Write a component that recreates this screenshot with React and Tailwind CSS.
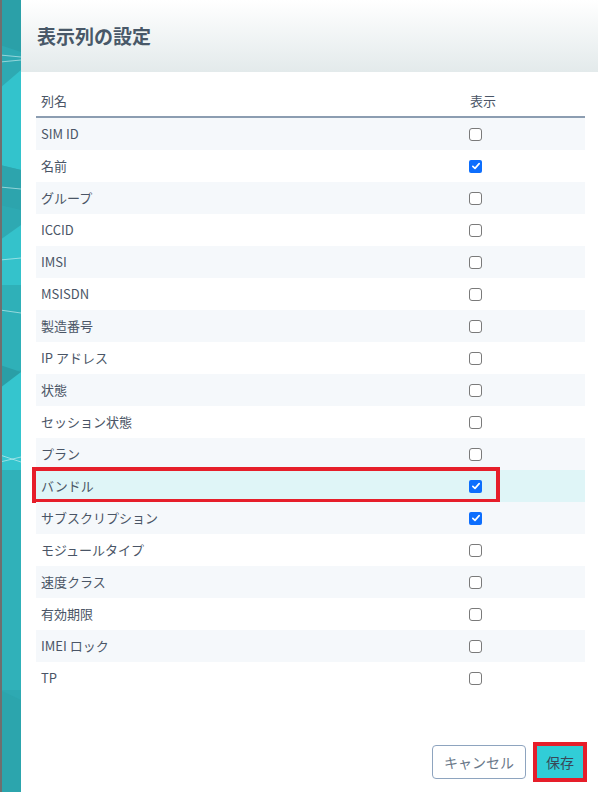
const rows = [
  { name: "SIM ID", on: false },
  { name: "名前", on: true },
  { name: "グループ", on: false },
  { name: "ICCID", on: false },
  { name: "IMSI", on: false },
  { name: "MSISDN", on: false },
  { name: "製造番号", on: false },
  { name: "IP アドレス", on: false },
  { name: "状態", on: false },
  { name: "セッション状態", on: false },
  { name: "プラン", on: false },
  { name: "バンドル", on: true, hl: true },
  { name: "サブスクリプション", on: true },
  { name: "モジュールタイプ", on: false },
  { name: "速度クラス", on: false },
  { name: "有効期限", on: false },
  { name: "IMEI ロック", on: false },
  { name: "TP", on: false },
];

function Check({ on }) {
  if (on) {
    return (
      <span className="grid h-[13px] w-[13px] place-items-center rounded-[2px] bg-[#0d6efd]">
        <svg viewBox="0 0 12 12" className="h-[10px] w-[10px]">
          <path d="M2.2 6.4 4.8 8.8 9.8 3.2" fill="none" stroke="#fff" strokeWidth="2" strokeLinecap="round" strokeLinejoin="round" />
        </svg>
      </span>
    );
  }
  return <span className="block h-[13px] w-[13px] rounded-[3px] border border-[#7a7a7a] bg-white" />;
}

function Backdrop() {
  return (
    <div className="relative w-[21px] shrink-0 bg-[#2fb3bb]">
      <svg viewBox="0 0 21 792" preserveAspectRatio="none" className="absolute inset-0 h-full w-full">
        <rect width="21" height="792" fill="#2ea9b2" />
        <polygon points="0,45 21,52 21,0 0,0" fill="#2ba0a8" />
        <polygon points="0,88 21,70 21,170 0,165" fill="#33c3cc" />
        <polygon points="0,165 21,170 21,210 0,205" fill="#2da4ad" />
        <polygon points="0,240 21,225 21,285 0,285" fill="#34c2cb" />
        <polygon points="0,285 21,285 21,370 0,375" fill="#2fb0b8" />
        <polygon points="0,365 21,372 21,395 0,388" fill="#2a9ea6" />
        <polygon points="0,388 21,372 21,470 0,470" fill="#35c5ce" />
        <polygon points="0,470 21,470 21,690 0,690" fill="#30b1b9" />
        <polygon points="0,690 21,700 21,792 0,792" fill="#2ca5ad" />
        <line x1="0" y1="55" x2="21" y2="57" stroke="#d9f3f5" strokeWidth="0.6" />
        <line x1="0" y1="62" x2="21" y2="60" stroke="#d9f3f5" strokeWidth="0.6" />
        <line x1="0" y1="187" x2="21" y2="189" stroke="#d9f3f5" strokeWidth="0.6" />
        <line x1="0" y1="260" x2="21" y2="258" stroke="#d9f3f5" strokeWidth="0.6" />
        <line x1="0" y1="310" x2="21" y2="313" stroke="#d9f3f5" strokeWidth="0.6" />
        <line x1="0" y1="455" x2="21" y2="462" stroke="#d9f3f5" strokeWidth="0.6" />
        <line x1="0" y1="462" x2="21" y2="457" stroke="#d9f3f5" strokeWidth="0.6" />
      </svg>
      <div className="absolute inset-y-0 left-0 w-[2px] bg-[#6f6f6f]" />
    </div>
  );
}

export default function App() {
  return (
    <div className="flex h-[792px] w-[598px] overflow-hidden bg-white font-['Noto_Sans_CJK_JP','Noto_Sans',sans-serif] text-[13px] text-[#4a5566]">
      <Backdrop />
      <div className="flex min-w-0 flex-1 flex-col bg-white">
        <header className="flex h-[72px] shrink-0 items-center bg-gradient-to-b from-white to-[#e3eaeb] px-4">
          <h1 className="text-[19px] font-bold text-[#485868]">表示列の設定</h1>
        </header>

        <div className="pl-[15px] pr-[13px] pt-[13px]">
          <div className="flex h-[33px] items-center border-b-2 border-[#8c9db1]">
            <div className="w-[433px] pl-[5px]">列名</div>
            <div className="pl-[1px]">表示</div>
          </div>
          <div>
            {rows.map((r, i) => (
              <div
                key={r.name}
                className={
                  "relative flex h-[32px] items-center " +
                  (r.hl ? "bg-[#dff5f7]" : i % 2 === 0 ? "bg-[#f5f8fb]" : "bg-white")
                }
              >
                <div className="w-[433px] pl-[5px]">{r.name}</div>
                <Check on={r.on} />
                {r.hl && (
                  <span className="pointer-events-none absolute -left-1 -top-[3px] h-[36px] w-[468px] border-4 border-[#e61e2a]" />
                )}
              </div>
            ))}
          </div>
        </div>

        <div className="mt-auto flex items-center justify-end gap-[7px] pb-[10px] pr-[11px]">
          <button className="h-[34px] w-[94px] rounded-[4px] border border-[#8ea4bf] bg-white text-[14px] text-[#6a7889]">
            キャンセル
          </button>
          <div className="border-4 border-[#e61e2a]">
            <button className="block h-[32px] w-[46px] bg-[#31cdd7] text-[14px] text-[#384858]">保存</button>
          </div>
        </div>
      </div>
    </div>
  );
}
